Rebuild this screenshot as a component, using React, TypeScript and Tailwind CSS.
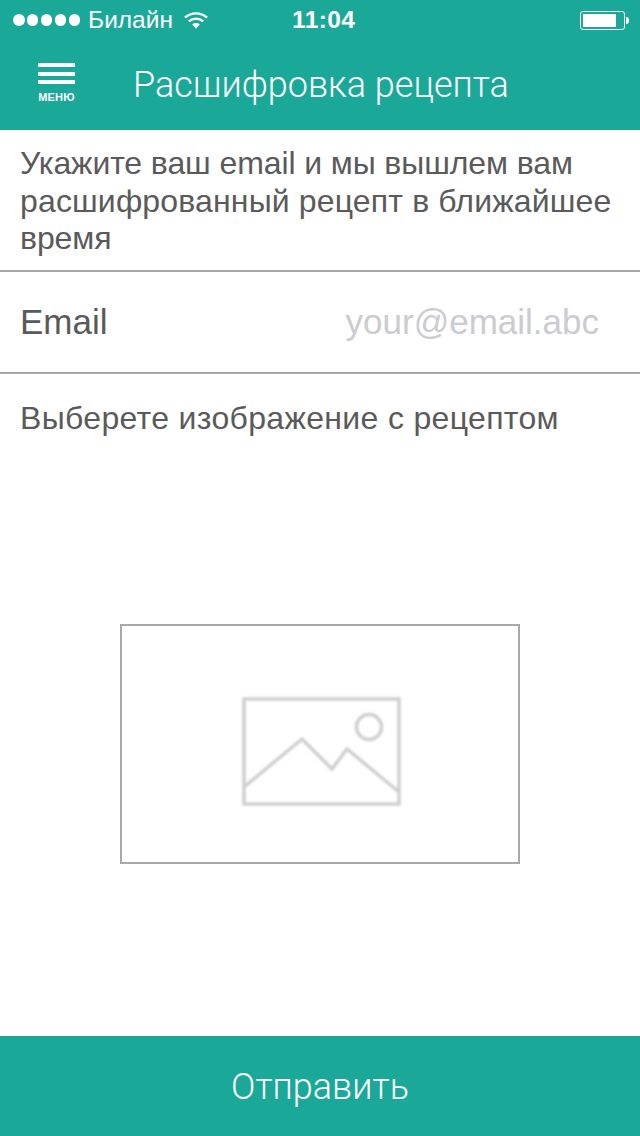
export default function App() {
  return (
    <div className="flex h-[1136px] w-[640px] flex-col overflow-hidden bg-white font-['Liberation_Sans',Arial,sans-serif] text-[#5a5a5a]">
      <header className="flex h-[130px] shrink-0 flex-col bg-[#1aa898] text-white">
        <div className="relative flex h-[40px] items-center pl-[13px]">
          <div className="flex gap-[2.4px]">
            {[0, 1, 2, 3, 4].map((i) => (
              <span key={i} className="h-[11.5px] w-[11.5px] rounded-full bg-white" />
            ))}
          </div>
          <span className="ml-[8px] text-[24.5px] leading-none">Билайн</span>
          <svg className="ml-[11px]" width="24" height="18" viewBox="0 0 25 18" fill="none">
            <path d="M1 6.5C7.5 .5 17.5 .5 24 6.5" stroke="white" strokeWidth="2.4" />
            <path d="M5 10.5C9.5 6.5 15.5 6.5 20 10.5" stroke="white" strokeWidth="2.4" />
            <path d="M8.5 13.5L12.5 18L16.5 13.5C14 11.5 11 11.5 8.5 13.5Z" fill="white" />
          </svg>
          <span className="absolute left-[292px] text-[24.5px] font-bold leading-none tracking-[0.4px]">11:04</span>
          <div className="absolute left-[580px] flex items-center">
            <div className="h-[19px] w-[45px] rounded-[3px] border border-white p-[2px]">
              <div className="h-full w-[33px] bg-white" />
            </div>
            <div className="ml-[1px] h-[7px] w-[3px] rounded-r-full bg-white" />
          </div>
        </div>
        <div className="flex h-[90px] items-start">
          <div className="ml-[38px] mt-[23px] flex w-[37px] flex-col gap-[4.5px]">
            <div className="h-[4px] bg-white" />
            <div className="h-[4px] bg-white" />
            <div className="h-[4px] bg-white" />
            <div className="mt-[3px] whitespace-nowrap text-center text-[11px] font-bold leading-[10px] tracking-[0.2px]">МЕНЮ</div>
          </div>
          <h1 className="ml-[58px] mt-[25px] whitespace-nowrap font-['Roboto',sans-serif] text-[36px] font-light leading-[40px]">Расшифровка рецепта</h1>
        </div>
      </header>

      <p className="h-[142px] shrink-0 border-b-2 border-[#a8a8a8] px-[20px] pt-[15px] text-[32px] leading-[37.5px] whitespace-nowrap">
        <span className="block tracking-[-0.1px]">Укажите ваш email и мы вышлем вам</span>
        <span className="block tracking-[0.15px]">расшифрованный рецепт в ближайшее</span>
        <span className="block tracking-[-0.1px]">время</span>
      </p>

      <div className="flex h-[102px] shrink-0 items-center justify-between border-b-2 border-[#a8a8a8] pl-[20px] pr-[41px]">
        <span className="text-[35px]">Email</span>
        <span className="text-[35px] text-[#cbcbd1]">your@email.abc</span>
      </div>

      <p className="mt-[26px] whitespace-nowrap px-[20px] text-[32px] leading-[37px] tracking-[0.33px]">Выберете изображение с рецептом</p>

      <div className="ml-[120px] mt-[187px] flex h-[240px] w-[400px] items-center justify-center border-2 border-[#a8a8a8] pl-[2px] pt-[14px]">
        <svg className="blur-[1px]" width="160" height="112" viewBox="0 0 160 112" fill="none" stroke="#cfcfcf" strokeWidth="3.5">
          <rect x="3" y="4" width="155" height="105" />
          <path d="M3 92L61 44L91 74L106 54L158 97" />
          <circle cx="128" cy="32" r="12.5" />
        </svg>
      </div>

      <button className="mt-auto flex h-[100px] shrink-0 items-center justify-center bg-[#1aa898] pt-[2px] font-['Roboto',sans-serif] text-[36px] font-light text-white">
        Отправить
      </button>
    </div>
  );
}
